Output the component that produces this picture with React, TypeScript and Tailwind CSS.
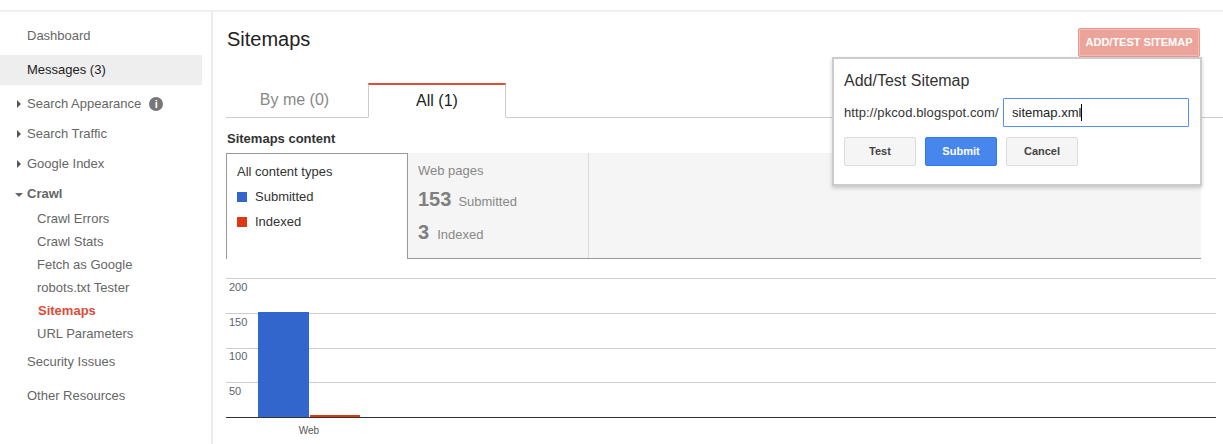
import React from 'react';

const font = "font-['Liberation_Sans',Arial,sans-serif]";

function Caret({ open }: { open?: boolean }) {
  return open ? (
    <span className="absolute left-[15px] top-[14px] h-0 w-0 border-x-[4px] border-t-[4px] border-x-transparent border-t-[#666]" />
  ) : (
    <span className="absolute left-[17px] top-[11px] h-0 w-0 border-y-[4px] border-l-[4px] border-y-transparent border-l-[#555]" />
  );
}

function Sidebar() {
  return (
    <aside className="h-[433px] w-[213px] shrink-0 border-r-2 border-[#ebebeb] text-[13px] text-[#666]">
      <div className="mt-[9px] flex h-[30px] items-center pl-[27px]">Dashboard</div>
      <div className="mt-[4px] flex h-[30px] w-[202px] items-center bg-[#eeeeee] pl-[27px] text-[#222]">Messages (3)</div>
      <div className="relative mt-[4px] flex h-[30px] items-center pl-[27px]">
        <Caret />
        Search Appearance
        <span className="ml-[8px] flex h-[14px] w-[14px] items-center justify-center rounded-full bg-[#777] text-[11px] font-bold leading-none text-white">i</span>
      </div>
      <div className="relative flex h-[30px] items-center pl-[27px]">
        <Caret />
        Search Traffic
      </div>
      <div className="relative flex h-[30px] items-center pl-[27px]">
        <Caret />
        Google Index
      </div>
      <div className="relative flex h-[30px] items-center pl-[27px] font-bold">
        <Caret open />
        Crawl
      </div>
      <ul className="-mt-[2px] pl-[37px] text-[13px]">
        <li className="flex h-[23px] items-center">Crawl Errors</li>
        <li className="flex h-[23px] items-center">Crawl Stats</li>
        <li className="flex h-[23px] items-center">Fetch as Google</li>
        <li className="flex h-[23px] items-center">robots.txt Tester</li>
        <li className="flex h-[23px] items-center pl-[1px] font-bold text-[#dd4b39]">Sitemaps</li>
        <li className="flex h-[23px] items-center">URL Parameters</li>
      </ul>
      <div className="mt-[2px] flex h-[30px] items-center pl-[27px]">Security Issues</div>
      <div className="mt-[4px] flex h-[30px] items-center pl-[27px]">Other Resources</div>
    </aside>
  );
}

function AddSitemapDialog() {
  return (
    <div className="absolute left-[619px] top-[45px] z-10 h-[129px] w-[370px] border-2 border-[#cccccc] bg-white pl-[10px] pt-[7px] shadow-[0_2px_4px_rgba(0,0,0,0.2)]">
      <h3 className="text-[16px] leading-[30px] text-[#333]">Add/Test Sitemap</h3>
      <div className="mt-[2px] flex h-[29px] items-center text-[13px] text-[#333]">
        <span className="w-[159px] tracking-[0.11px]">http://pkcod.blogspot.com/</span>
        <div className="flex h-[29px] w-[186px] items-center rounded-[1px] border border-[#4d90fe] pl-[8px] text-[13px] text-[#222]">
          sitemap.xml
          <span className="h-[17px] w-px bg-black" />
        </div>
      </div>
      <div className="mt-[10px] flex gap-[9px] text-[11px] font-bold">
        <button className="h-[29px] w-[72px] rounded-[2px] border border-[#dcdcdc] bg-[#f5f5f5] text-[#444]">Test</button>
        <button className="h-[29px] w-[72px] rounded-[2px] border border-[#3079ed] bg-[#4787ed] text-white">Submit</button>
        <button className="h-[29px] w-[72px] rounded-[2px] border border-[#dcdcdc] bg-[#f5f5f5] text-[#444]">Cancel</button>
      </div>
    </div>
  );
}

function ContentTable() {
  return (
    <div className="mr-[22px] flex h-[106px] text-[13px]">
      <div className="h-[106px] w-[182px] border-x border-t border-[#999] bg-white pl-[10px] pt-[9px] text-[#333]">
        <div className="leading-[18px]">All content types</div>
        <div className="mt-[7px] flex h-[18px] items-center">
          <span className="mr-[8px] h-[10px] w-[10px] bg-[#3366cc]" />
          Submitted
        </div>
        <div className="mt-[7px] flex h-[18px] items-center">
          <span className="mr-[8px] h-[10px] w-[10px] bg-[#dc3912]" />
          Indexed
        </div>
      </div>
      <div className="flex-1 border-b border-[#999] bg-[#f5f5f5]">
        <div className="h-[105px] w-[181px] border-r border-[#dcdcdc] pl-[10px] pt-[9px] text-[#888]">
          <div className="leading-[18px]">Web pages</div>
          <div className="mt-[4px] flex h-[26px] items-baseline">
            <span className="mr-[7px] text-[20px] font-bold text-[#808080]">153</span>
            Submitted
          </div>
          <div className="mt-[7px] flex h-[26px] items-baseline">
            <span className="mr-[8px] text-[20px] font-bold text-[#808080]">3</span>
            Indexed
          </div>
        </div>
      </div>
    </div>
  );
}

function Chart() {
  const grid = [0, 35, 70, 104];
  const labels = [
    { y: 13, t: '200' },
    { y: 48, t: '150' },
    { y: 82, t: '100' },
    { y: 117, t: '50' },
  ];
  return (
    <svg width="990" height="166" className="mt-[19px] block">
      {grid.map((y) => (
        <rect key={y} x="0" y={y} width="990" height="1" fill="#cccccc" />
      ))}
      {labels.map((l) => (
        <text key={l.t} x="3" y={l.y} fontSize="11" fill="#5a6470" fontFamily="Liberation Sans, Arial, sans-serif">
          {l.t}
        </text>
      ))}
      <rect x="32" y="34" width="51" height="105" fill="#3366cc" />
      <rect x="84" y="137" width="50" height="2" fill="#dc3912" />
      <rect x="0" y="139" width="990" height="1" fill="#333333" />
      <text x="83" y="156" fontSize="10" textAnchor="middle" fill="#555" fontFamily="Liberation Sans, Arial, sans-serif">
        Web
      </text>
    </svg>
  );
}

export default function App() {
  return (
    <div className={`${font} h-[444px] w-[1223px] overflow-hidden bg-white`}>
      <div className="mt-[10px] border-t-2 border-[#f0f0f0]" />
      <div className="flex">
        <Sidebar />
        <main className="relative flex-1 pl-[13px]">
          <div className="flex h-[71px] items-start justify-between pl-[1px] pr-[23px]">
            <h1 className="mt-[14px] text-[20px] leading-[26px] text-[#222]">Sitemaps</h1>
            <button className="mt-[16px] h-[29px] w-[122px] rounded-[2px] border border-[#e9998d] bg-[#eca399] text-[11px] font-bold text-white shadow-[inset_0_0_0_1px_#f2bdb5]">
              ADD/TEST SITEMAP
            </button>
          </div>
          <AddSitemapDialog />
          <div className="flex h-[35px] border-b border-[#cccccc] text-[16px]">
            <div className="flex w-[142px] items-center justify-center pr-[5px] text-[#888]">By me (0)</div>
            <div className="-mb-px flex h-[35px] w-[138px] items-center justify-center border-x border-b border-t-2 border-[#cccccc] border-t-[#dd4b39] border-b-white bg-white text-[#222]">
              All (1)
            </div>
          </div>
          <div className="mt-[12px] h-[23px] pl-[1px] text-[13px] font-bold leading-[18px] text-[#333]">Sitemaps content</div>
          <ContentTable />
          <Chart />
        </main>
      </div>
    </div>
  );
}
